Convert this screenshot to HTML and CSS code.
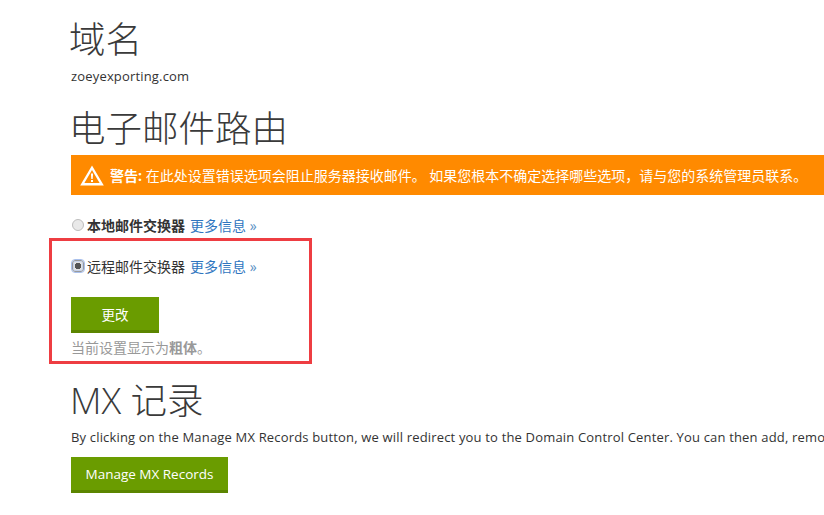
FILE: index.html
```html
<!DOCTYPE html>
<html lang="zh-CN">
<head>
<meta charset="utf-8">
<title>域名</title>
<link rel="stylesheet" href="styles.css">
</head>
<body>
<main class="page">
  <h1 class="heading heading-first">域名</h1>
  <p class="domain">zoeyexporting.com</p>
  <h1 class="heading heading-mail">电子邮件路由</h1>
  <div class="warning">
    <svg class="warning-icon" width="24" height="21" viewBox="0 0 24 21" aria-hidden="true">
      <path fill="#fff" fill-rule="evenodd" d="M12 0.5 L23.8 20.5 H0.2 Z M12 5 L4.4 18 H19.6 Z"/>
      <path fill="#fff" d="M10.9 8.5 H13.1 L12.7 14 H11.3 Z"/>
      <rect fill="#fff" x="11" y="15" width="2" height="2"/>
    </svg>
    <span class="warning-text"><b>警告:</b> 在此处设置错误选项会阻止服务器接收邮件。 如果您根本不确定选择哪些选项，请与您的系统管理员联系。</span>
  </div>
  <div class="option option-local">
    <span class="radio"></span>
    <b class="option-label">本地邮件交换器</b>
    <a class="more" href="#">更多信息 <span class="chev">»</span></a>
  </div>
  <div class="option option-remote">
    <span class="radio radio-checked"></span>
    <span class="option-label">远程邮件交换器</span>
    <a class="more" href="#">更多信息 <span class="chev">»</span></a>
  </div>
  <a class="button button-change" href="#">更改</a>
  <p class="hint">当前设置显示为<b>粗体</b>。</p>
  <h1 class="heading heading-mx">MX 记录</h1>
  <p class="intro">By clicking on the Manage MX Records button, we will redirect you to the Domain Control Center. You can then add, remove or edit your MX records.</p>
  <a class="button button-mx" href="#">Manage MX Records</a>
</main>
<div class="highlight"></div>
</body>
</html>
```
FILE: styles.css
```css
html, body {
  margin: 0;
  padding: 0;
  background: #fff;
  overflow: hidden;
  height: 515px;
}
body {
  position: relative;
  font-family: "Open Sans", "Noto Sans CJK SC", sans-serif;
  font-size: 14px;
  color: #333;
}
.page {
  padding-left: 71px;
  width: 753px;
  box-sizing: border-box;
}
.heading {
  margin: 0 0 0 -2px;
  font-size: 36.5px;
  font-weight: 300;
  line-height: 44px;
  color: #3a3a3a;
  white-space: nowrap;
}
.heading-first { padding-top: 17px; }
.heading-mail { margin-top: 21px; }
.heading-mx { margin-top: 21px; margin-left: -1px; }
.domain, .intro {
  margin: 0;
  font-size: 13px;
  line-height: 18px;
  white-space: nowrap;
  letter-spacing: 0.17px;
}
.domain { margin-top: 6px; }
.intro { margin-top: 6px; }
.warning {
  display: flex;
  align-items: center;
  gap: 6px;
  margin-top: 5px;
  width: 800px;
  height: 40px;
  padding-left: 9px;
  box-sizing: border-box;
  background: #ff8a00;
  color: #fff;
  white-space: nowrap;
  font-size: 14px;
}
.warning-icon { flex: none; }
.warning b { font-weight: 700; }
.option {
  display: flex;
  align-items: center;
  height: 20px;
  white-space: nowrap;
}
.option-local { margin-top: 20px; }
.option-remote { margin-top: 21px; }
.option-label { margin-left: 3px; color: #333; }
b.option-label { font-weight: 700; }
.more {
  margin-left: 5px;
  color: #2f76c0;
  text-decoration: none;
}
.chev { color: #5a8fc4; }
.radio {
  flex: none;
  box-sizing: border-box;
  width: 12px;
  height: 12px;
  margin-left: 1px;
  border: 1px solid #bdbdbd;
  border-radius: 50%;
  background: #e9e9e9;
}
.radio-checked {
  background: radial-gradient(circle, #555 0 3px, #e2e2e2 3.5px);
  border-color: #9a9a9a;
  outline: 1px solid #a9c0ec;
  border-radius: 3px;
  box-shadow: inset 0 0 0 1px #c4d2ec;
}
.button {
  display: flex;
  align-items: center;
  justify-content: center;
  box-sizing: border-box;
  background: #6a9c00;
  border-bottom: 3px solid #5b8500;
  color: #fff;
  text-decoration: none;
  font-size: 13.5px;
  height: 36px;
}
.button-change { width: 88px; margin-top: 21px; }
.button-mx { width: 157px; margin-top: 11px; }
.hint {
  margin: 6px 0 0;
  font-size: 14px;
  line-height: 18px;
  color: #999;
  white-space: nowrap;
}
.highlight {
  position: absolute;
  left: 49px;
  top: 238px;
  width: 263px;
  height: 126px;
  box-sizing: border-box;
  border: 3px solid #ee3d42;
}
```
